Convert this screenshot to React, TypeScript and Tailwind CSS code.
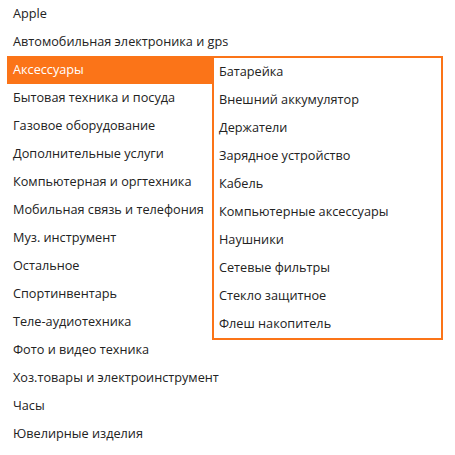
const categories = [
  "Apple",
  "Автомобильная электроника и gps",
  "Аксессуары",
  "Бытовая техника и посуда",
  "Газовое оборудование",
  "Дополнительные услуги",
  "Компьютерная и оргтехника",
  "Мобильная связь и телефония",
  "Муз. инструмент",
  "Остальное",
  "Спортинвентарь",
  "Теле-аудиотехника",
  "Фото и видео техника",
  "Хоз.товары и электроинструмент",
  "Часы",
  "Ювелирные изделия",
];

const accessories = [
  "Батарейка",
  "Внешний аккумулятор",
  "Держатели",
  "Зарядное устройство",
  "Кабель",
  "Компьютерные аксессуары",
  "Наушники",
  "Сетевые фильтры",
  "Стекло защитное",
  "Флеш накопитель",
];

export default function App() {
  return (
    <div className="relative h-[455px] w-[455px] bg-white pl-[7px] font-['Open_Sans',sans-serif] text-[12.7px] text-[#222]">
      <ul className="flex w-[205px] flex-col">
        {categories.map((c) => {
          const active = c === "Аксессуары";
          return (
            <li
              key={c}
              className={
                active
                  ? "flex h-[28px] items-center whitespace-nowrap bg-[#fb7418] px-[6px] text-white"
                  : "flex h-[28px] items-center whitespace-nowrap px-[6px]"
              }
            >
              {c}
            </li>
          );
        })}
      </ul>

      {/* выпадающее подменю */}
      <ul className="absolute left-[212px] top-[56px] flex w-[231px] flex-col border-2 border-[#fb7418] bg-white px-[5px]">
        {accessories.map((a) => (
          <li key={a} className="flex h-[28px] items-center whitespace-nowrap">
            {a}
          </li>
        ))}
      </ul>
    </div>
  );
}
